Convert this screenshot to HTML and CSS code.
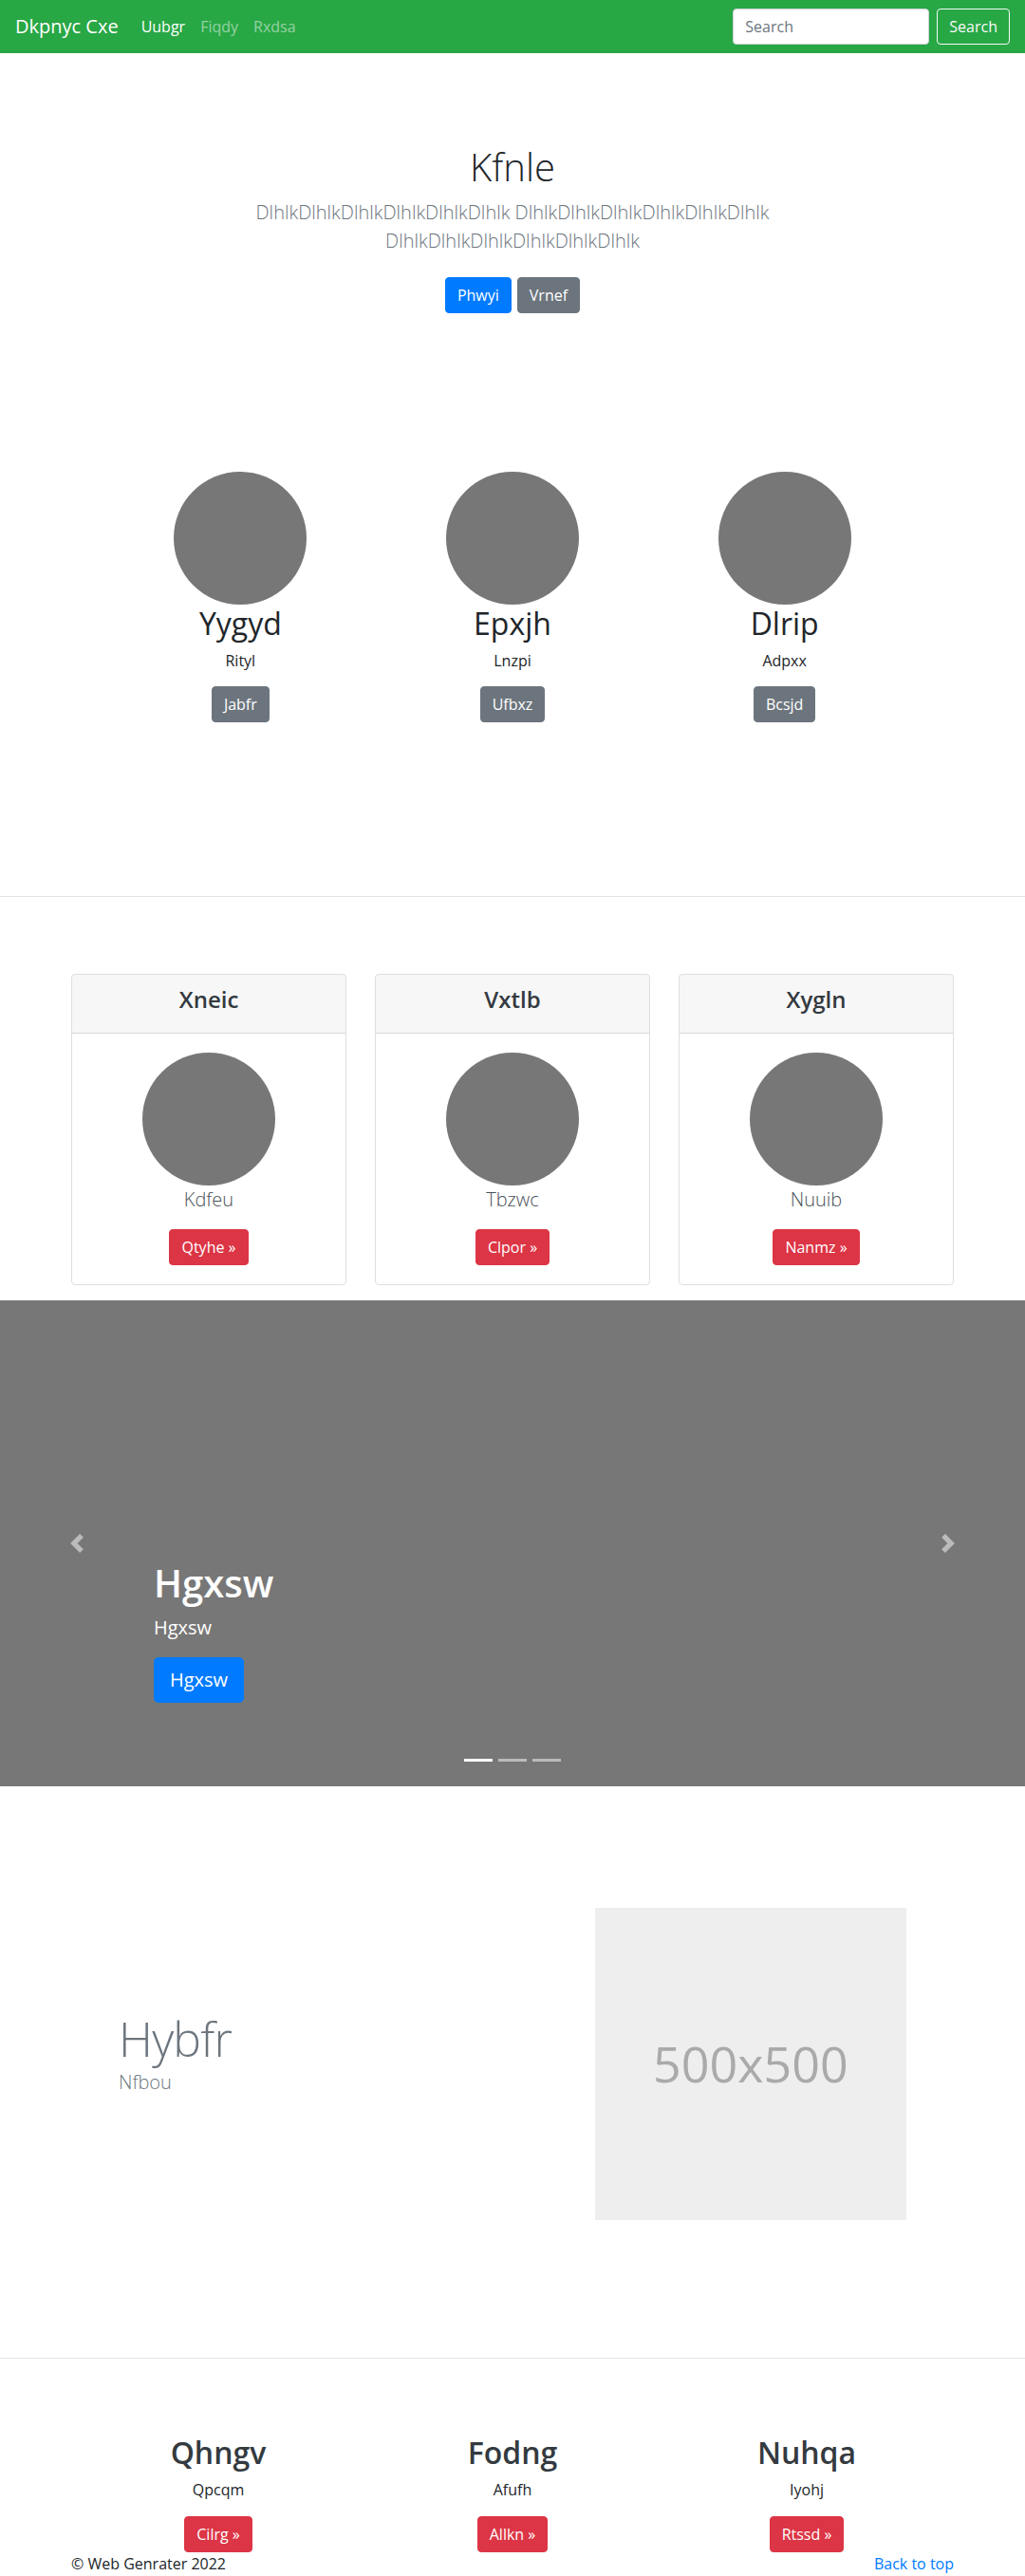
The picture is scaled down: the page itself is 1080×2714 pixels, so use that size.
FILE: index.html
```html
<!DOCTYPE html>
<html lang="en">
<head>
<meta charset="utf-8">
<title>Dkpnyc Cxe</title>
<link rel="stylesheet" href="styles.css">
</head>
<body>
<nav class="navbar">
  <a class="brand" href="#">Dkpnyc Cxe</a>
  <ul class="nav-links">
    <li><a class="nav-link active" href="#">Uubgr</a></li>
    <li><a class="nav-link" href="#">Fiqdy</a></li>
    <li><a class="nav-link" href="#">Rxdsa</a></li>
  </ul>
  <form class="search">
    <input class="search-input" type="text" placeholder="Search">
    <button class="search-btn" type="button">Search</button>
  </form>
</nav>

<section class="hero">
  <h1 class="hero-title">Kfnle</h1>
  <p class="hero-lead">DlhlkDlhlkDlhlkDlhlkDlhlkDlhlk DlhlkDlhlkDlhlkDlhlkDlhlkDlhlk DlhlkDlhlkDlhlkDlhlkDlhlkDlhlk</p>
  <div class="hero-actions">
    <a class="btn btn-primary" href="#">Phwyi</a>
    <a class="btn btn-secondary" href="#">Vrnef</a>
  </div>
</section>

<section class="people">
  <div class="person">
    <div class="circle"></div>
    <h2 class="person-name">Yygyd</h2>
    <p class="person-sub">Rityl</p>
    <a class="btn btn-secondary" href="#">Jabfr</a>
  </div>
  <div class="person">
    <div class="circle"></div>
    <h2 class="person-name">Epxjh</h2>
    <p class="person-sub">Lnzpi</p>
    <a class="btn btn-secondary" href="#">Ufbxz</a>
  </div>
  <div class="person">
    <div class="circle"></div>
    <h2 class="person-name">Dlrip</h2>
    <p class="person-sub">Adpxx</p>
    <a class="btn btn-secondary" href="#">Bcsjd</a>
  </div>
</section>

<hr class="divider divider-top">

<section class="cards">
  <div class="card">
    <div class="card-header"><h4 class="card-title">Xneic</h4></div>
    <div class="card-body">
      <div class="circle"></div>
      <p class="card-text">Kdfeu</p>
      <a class="btn btn-danger" href="#">Qtyhe &raquo;</a>
    </div>
  </div>
  <div class="card">
    <div class="card-header"><h4 class="card-title">Vxtlb</h4></div>
    <div class="card-body">
      <div class="circle"></div>
      <p class="card-text">Tbzwc</p>
      <a class="btn btn-danger" href="#">Clpor &raquo;</a>
    </div>
  </div>
  <div class="card">
    <div class="card-header"><h4 class="card-title">Xygln</h4></div>
    <div class="card-body">
      <div class="circle"></div>
      <p class="card-text">Nuuib</p>
      <a class="btn btn-danger" href="#">Nanmz &raquo;</a>
    </div>
  </div>
</section>

<section class="carousel">
  <a class="carousel-control control-prev" href="#">
    <svg class="control-icon" viewBox="0 0 8 8" width="20" height="20"><path d="M5.25 0l-4 4 4 4 1.5-1.5L4.25 4l2.5-2.5L5.25 0z"/></svg>
  </a>
  <a class="carousel-control control-next" href="#">
    <svg class="control-icon" viewBox="0 0 8 8" width="20" height="20"><path d="M2.75 0l-1.5 1.5L3.75 4l-2.5 2.5L2.75 8l4-4-4-4z"/></svg>
  </a>
  <div class="carousel-caption">
    <h1 class="caption-title">Hgxsw</h1>
    <p class="caption-text">Hgxsw</p>
    <p class="caption-action"><a class="btn btn-lg btn-primary" href="#">Hgxsw</a></p>
  </div>
  <ol class="indicators">
    <li class="indicator active"></li>
    <li class="indicator"></li>
    <li class="indicator"></li>
  </ol>
</section>

<section class="featurette">
  <div class="featurette-text">
    <h2 class="featurette-heading">Hybfr</h2>
    <p class="featurette-lead">Nfbou</p>
  </div>
  <div class="featurette-media">
    <div class="placeholder">500x500</div>
  </div>
</section>

<hr class="divider divider-bottom">

<section class="marketing">
  <div class="market-col">
    <h2 class="market-title">Qhngv</h2>
    <p class="market-sub">Qpcqm</p>
    <a class="btn btn-danger" href="#">Cilrg &raquo;</a>
  </div>
  <div class="market-col">
    <h2 class="market-title">Fodng</h2>
    <p class="market-sub">Afufh</p>
    <a class="btn btn-danger" href="#">Allkn &raquo;</a>
  </div>
  <div class="market-col">
    <h2 class="market-title">Nuhqa</h2>
    <p class="market-sub">Iyohj</p>
    <a class="btn btn-danger" href="#">Rtssd &raquo;</a>
  </div>
</section>

<footer class="footer">
  <p class="copyright">&copy; Web Genrater 2022</p>
  <a class="back-top" href="#">Back to top</a>
</footer>
</body>
</html>
```

FILE: styles.css
```css
* { box-sizing: border-box; }

html, body {
  margin: 0;
  padding: 0;
}

body {
  font-family: "Open Sans", "Noto Sans", sans-serif;
  font-size: 16px;
  line-height: 1.5;
  color: #212529;
  background: #fff;
}

a { text-decoration: none; }

/* Navbar */
.navbar {
  display: flex;
  align-items: center;
  height: 56px;
  padding: 8px 16px;
  background: #28a745;
}
.brand {
  font-size: 20px;
  line-height: 30px;
  padding: 5px 0;
  margin-right: 16px;
  color: #fff;
}
.nav-links {
  display: flex;
  list-style: none;
  margin: 0;
  padding: 0;
}
.nav-link {
  display: block;
  padding: 8px;
  color: rgba(255, 255, 255, 0.5);
}
.nav-link.active { color: #fff; }
.search {
  display: flex;
  align-items: center;
  margin-left: auto;
}
.search-input {
  width: 207px;
  height: 38px;
  padding: 6px 12px;
  font-family: inherit;
  font-size: 16px;
  color: #495057;
  background: #fff;
  border: 1px solid #ced4da;
  border-radius: 4px;
}
.search-input::placeholder { color: #6c757d; }
.search-btn {
  height: 38px;
  margin-left: 8px;
  padding: 6px 12px;
  font-family: inherit;
  font-size: 16px;
  line-height: 24px;
  color: #f8f9fa;
  background: transparent;
  border: 1px solid #f8f9fa;
  border-radius: 4px;
}

/* Buttons */
.btn {
  display: inline-block;
  padding: 6px 12px;
  font-size: 16px;
  line-height: 24px;
  color: #fff;
  border: 1px solid transparent;
  border-radius: 4px;
}
.btn-lg {
  padding: 8px 16px;
  font-size: 20px;
  line-height: 30px;
  border-radius: 5px;
}
.btn-primary { background: #007bff; border-color: #007bff; }
.btn-secondary { background: #6c757d; border-color: #6c757d; }
.btn-danger { background: #dc3545; border-color: #dc3545; }

/* Hero */
.hero {
  padding-top: 96px;
  text-align: center;
}
.hero-title {
  margin: 0;
  font-size: 40px;
  line-height: 48px;
  font-weight: 300;
}
.hero-lead {
  max-width: 700px;
  margin: 9px auto 0;
  font-size: 20px;
  line-height: 30px;
  font-weight: 300;
  color: #6c757d;
}
.hero-actions {
  display: flex;
  justify-content: center;
  gap: 6px;
  margin-top: 23px;
}

/* Circles */
.circle {
  width: 140px;
  height: 140px;
  margin: 0 auto;
  border-radius: 50%;
  background: #777;
}

.people {
  display: grid;
  grid-template-columns: repeat(3, 1fr);
  width: 860px;
  margin: 167px auto 0;
  text-align: center;
}
.person-name {
  margin: 1px 0 8px;
  font-size: 32px;
  line-height: 38.4px;
  font-weight: 400;
}
.person-sub {
  margin: 0 0 15px;
}

/* Dividers */
.divider {
  height: 0;
  margin: 0;
  border: 0;
  border-top: 1px solid rgba(0, 0, 0, 0.1);
}
.divider-top { margin-top: 183px; }
.divider-bottom { margin-top: 145px; }

/* Cards */
.cards {
  display: grid;
  grid-template-columns: repeat(3, 1fr);
  gap: 30px;
  width: 930px;
  margin: 81px auto 0;
}
.card {
  border: 1px solid rgba(0, 0, 0, 0.125);
  border-radius: 4px;
  overflow: hidden;
}
.card-header {
  padding: 12px 20px;
  background: rgba(0, 0, 0, 0.03);
  border-bottom: 1px solid rgba(0, 0, 0, 0.125);
  text-align: center;
}
.card-title {
  margin: 0 0 8px;
  font-size: 24px;
  line-height: 28.8px;
  font-weight: 600;
  color: #343a40;
}
.card-body {
  padding: 20px;
  text-align: center;
}
.card-text {
  margin: 0 0 16px;
  font-size: 20px;
  line-height: 30px;
  font-weight: 300;
  color: #495057;
}

/* Carousel */
.carousel {
  position: relative;
  height: 512px;
  margin-top: 16px;
  background: #777;
  color: #fff;
}
.carousel-control {
  position: absolute;
  top: 0;
  bottom: 0;
  width: 15%;
  display: flex;
  align-items: center;
  justify-content: center;
  opacity: 0.5;
}
.control-prev { left: 0; }
.control-next { right: 0; }
.control-icon { fill: #fff; display: block; }
.carousel-caption {
  position: absolute;
  left: 15%;
  right: 15%;
  bottom: 52px;
  padding: 20px 0;
  text-align: left;
}
.caption-title {
  margin: 0 0 8px;
  font-size: 40px;
  line-height: 48px;
  font-weight: 600;
}
.caption-text {
  margin: 0 0 16px;
  font-size: 20px;
  line-height: 30px;
}
.caption-action { margin: 0 0 16px; }
.indicators {
  position: absolute;
  left: 0;
  right: 0;
  bottom: 0;
  display: flex;
  justify-content: center;
  margin: 0 0 16px;
  padding: 0;
  list-style: none;
}
.indicator {
  width: 30px;
  height: 23px;
  margin: 0 3px;
  border-top: 10px solid transparent;
  border-bottom: 10px solid transparent;
  background: #fff;
  background-clip: padding-box;
  opacity: 0.5;
}
.indicator.active { opacity: 1; }

/* Featurette */
.featurette {
  display: grid;
  grid-template-columns: 7fr 5fr;
  align-items: center;
  width: 860px;
  margin: 128px auto 0;
}
.featurette-text,
.featurette-media { padding: 0 15px; }
.featurette-heading {
  margin: 0 0 6px;
  font-size: 50px;
  line-height: 1;
  font-weight: 300;
  letter-spacing: -0.8px;
  color: #6c757d;
}
.featurette-lead {
  margin: 0 0 16px;
  font-size: 20px;
  line-height: 30px;
  font-weight: 300;
  color: #6c757d;
}
.placeholder {
  display: flex;
  align-items: center;
  justify-content: center;
  width: 100%;
  aspect-ratio: 1 / 1;
  background: #eee;
  color: #aaa;
  font-size: 52px;
  line-height: 1;
}

/* Marketing */
.marketing {
  display: grid;
  grid-template-columns: repeat(3, 1fr);
  width: 930px;
  margin: 80px auto 0;
  text-align: center;
}
.market-title {
  margin: 0 0 8px;
  font-size: 32px;
  line-height: 38.4px;
  font-weight: 600;
  color: #343a40;
}
.market-sub { margin: 0 0 16px; }

/* Footer */
.footer {
  display: flex;
  justify-content: space-between;
  width: 930px;
  margin: 0 auto;
}
.copyright { margin: 0; }
.back-top { color: #007bff; }
```
